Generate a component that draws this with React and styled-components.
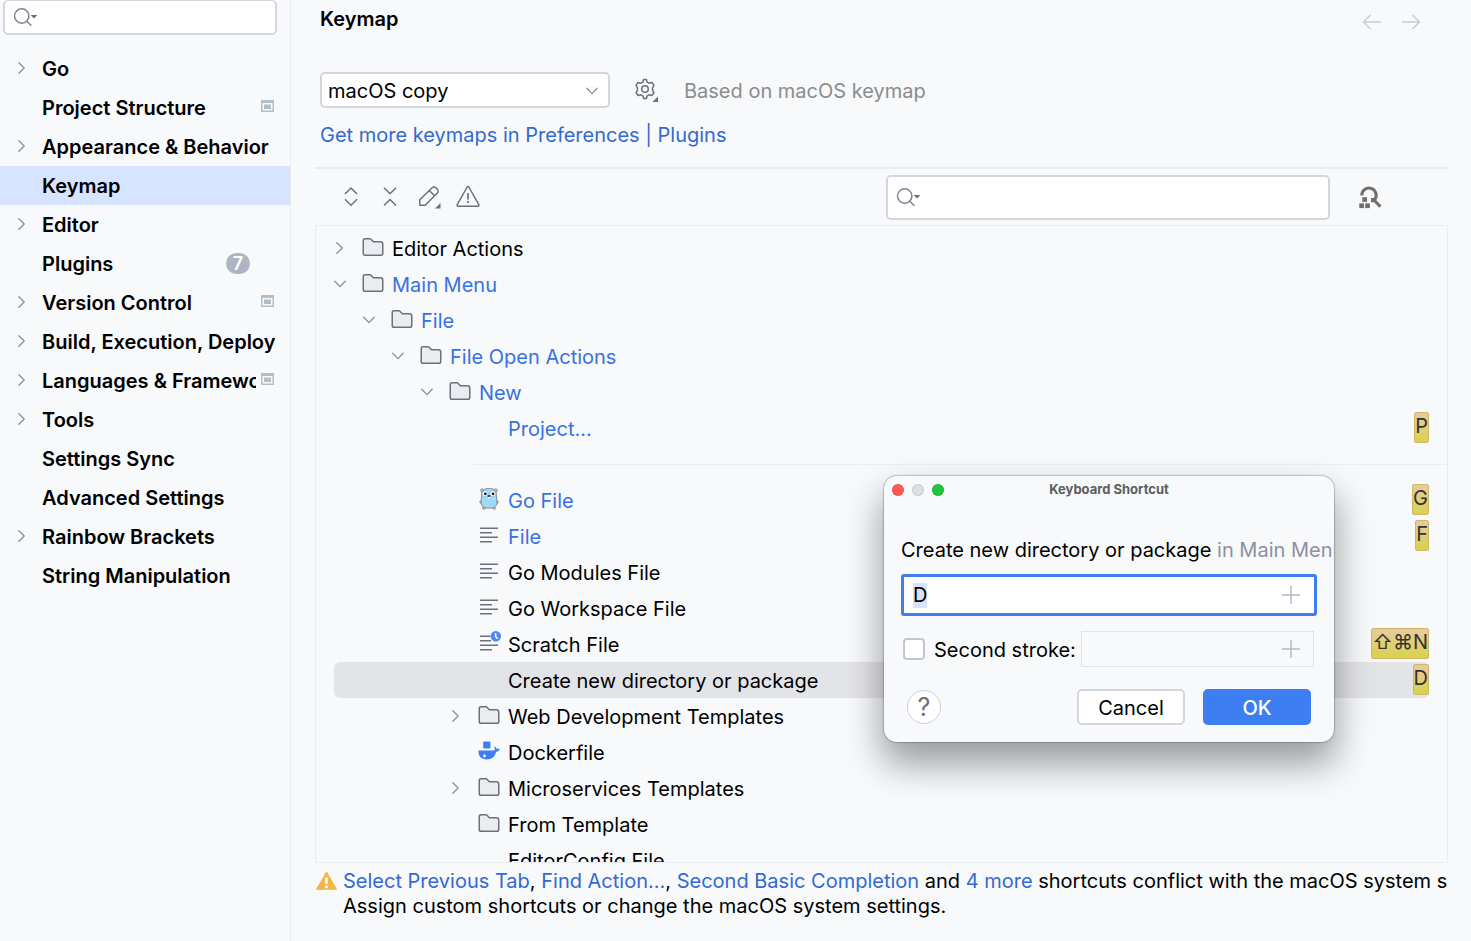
import React, { useEffect, useRef } from "react";
import styled, { createGlobalStyle, css } from "styled-components";

const GlobalStyle = createGlobalStyle`
  * { box-sizing: border-box; }
  body { margin: 0; background: #f7f9fb; }
  body, button, input, select {
    font-family: Inter, "Liberation Sans", sans-serif;
    font-size: 20px;
    line-height: 25px;
    color: #000;
  }
  button { cursor: pointer; }
`;

const Page = styled.div`
  display: flex;
  height: 100vh;
  overflow: hidden;
  position: relative;
`;

/* ---------- sidebar ---------- */

const Sidebar = styled.aside`
  flex: 0 0 291px;
  min-width: 0;
  border-right: 1px solid #ebecf0;
`;

const SearchBox = styled.label`
  display: flex;
  align-items: center;
  background: #fff;
  border: 2px solid #d3d5df;
  border-radius: 5px;
`;

const SidebarSearch = styled(SearchBox)`
  height: 35px;
  margin: 0 13px 14px 3px;
  padding: 0 7px;
  border-top-width: 1px;
`;

const SearchInput = styled.input`
  flex: 1;
  min-width: 0;
  border: 0;
  outline: 0;
  background: transparent;
`;

const NavList = styled.ul`
  list-style: none;
  margin: 0;
  padding: 0;
`;

const NavLink = styled.a`
  display: flex;
  align-items: center;
  height: 39px;
  padding: 0 15px 0 16px;
  color: #000;
  font-weight: 600;
  text-decoration: none;
  background: ${(p) => (p.$active ? "#d7e4ff" : "transparent")};
`;

const NavArrow = styled.span`
  display: flex;
  flex: 0 0 26px;
  padding-bottom: 2px;
`;

const NavText = styled.span`
  flex: 1;
  min-width: 0;
  padding-top: 2px;
  overflow: hidden;
  white-space: nowrap;
`;

const CountBadge = styled.span`
  width: 24px;
  height: 21px;
  margin-right: 25px;
  border-radius: 11px;
  background: #aeb4c3;
  color: #fff;
  font-size: 18px;
  line-height: 21px;
  text-align: center;
`;

const ProjectMark = styled.svg`
  flex: none;
  margin: 0 1px 4px 5px;
`;

/* ---------- main panel ---------- */

const Main = styled.main`
  flex: 1;
  min-width: 0;
  display: flex;
  flex-direction: column;
  padding: 0 23px 22px 24px;
`;

const Header = styled.header`
  display: flex;
  justify-content: space-between;
  align-items: center;
  height: 38px;
  padding: 0 25px 0 5px;
`;

const Title = styled.h1`
  margin: 0;
  font-size: 20px;
  font-weight: 600;
`;

const HistoryButtons = styled.div`
  display: flex;
  gap: 15px;
  padding-top: 6px;
`;

const IconButton = styled.button`
  display: flex;
  flex: none;
  padding: 0;
  border: 0;
  background: transparent;
`;

const SchemeRow = styled.div`
  display: flex;
  align-items: center;
  margin-top: 34px;
  padding-left: 5px;
`;

const SelectWrap = styled.div`
  display: grid;
  align-items: center;
  width: 290px;
  margin-right: 23px;
  > * { grid-area: 1 / 1; }
  > svg { justify-self: end; margin: 2px 12px 0 0; pointer-events: none; }
`;

const Select = styled.select`
  appearance: none;
  width: 100%;
  height: 36px;
  padding: 2px 6px 0;
  border: 2px solid #d3d5df;
  border-radius: 5px;
  background: #fff;
`;

const Hint = styled.span`
  margin-left: 25px;
  padding-top: 2px;
  color: #8c8c8c;
`;

const Link = styled.a`
  color: #3369d0;
  text-decoration: none;
`;

const PluginsLink = styled(Link)`
  align-self: flex-start;
  margin: 15px 0 19px 5px;
`;

const Toolbar = styled.div`
  display: flex;
  align-items: center;
  gap: 15px;
  height: 58px;
  padding: 0 66px 0 24px;
  border-top: 2px solid #ebecf0;
`;

const ActionSearch = styled(SearchBox)`
  flex: 0 1 444px;
  height: 45px;
  margin: 0 13px 0 auto;
  padding: 0 7px;
`;

const Tree = styled.div`
  flex: 1;
  min-height: 0;
  overflow: hidden;
  padding: 4px 0 0 18px;
  border: 1px solid #ebecf0;
`;

const TreeRow = styled.div`
  display: flex;
  align-items: center;
  height: 36px;
  margin-right: 18px;
  padding-left: ${(p) => p.$level * 29}px;
  border-radius: 6px;
  white-space: nowrap;
  color: ${(p) => (p.$changed ? "#3871e1" : "#000")};
  background: ${(p) => (p.$selected ? "#e3e4e8" : "transparent")};
`;

const TreeArrow = styled.span`
  display: flex;
  flex: 0 0 27px;
`;

const TreeIcon = styled.span`
  display: flex;
  flex: 0 0 31px;
  height: 26px;
`;

const TreeText = styled.span`
  padding-top: 2px;
`;

const TreeSeparator = styled.hr`
  height: 1px;
  margin: 18px 0 17px 139px;
  border: 0;
  background: #ebecf0;
`;

const Shortcut = styled.kbd`
  height: 31px;
  margin-left: auto;
  margin-bottom: 2px;
  border: 1px solid #cfb669;
  border-radius: 2px;
  background: linear-gradient(#e8cba0, #d9d24c);
  color: #333;
  font-family: inherit;
  line-height: 27px;
`;

const Conflict = styled.footer`
  display: flex;
  margin-top: 6px;
  overflow: hidden;
  white-space: nowrap;
`;

const ConflictIcon = styled.span`
  flex: 0 0 28px;
`;

const ConflictText = styled.p`
  margin: 0;
`;

/* ---------- dialog ---------- */

const Dialog = styled.form`
  position: absolute;
  left: 884px;
  top: 476px;
  width: 450px;
  overflow: hidden;
  padding-bottom: 17px;
  border-radius: 13px;
  background: #f7f9fb;
  box-shadow: 0 0 1px 1px rgba(0, 0, 0, 0.2), 0 20px 36px 2px rgba(0, 0, 0, 0.38);
`;

const TitleBar = styled.div`
  display: grid;
  align-items: center;
  height: 28px;
  > * { grid-area: 1 / 1; }
`;

const DialogTitle = styled.h2`
  margin: 0;
  padding-bottom: 2px;
  color: #5c5d60;
  font-size: 13px;
  font-weight: 700;
  line-height: 16px;
  text-align: center;
`;

const Lights = styled.div`
  display: flex;
  gap: 8px;
  padding-left: 8px;
`;

const Light = styled.button`
  width: 12px;
  height: 12px;
  padding: 0;
  border: 1px solid rgba(0, 0, 0, 0.1);
  border-radius: 50%;
  background: ${(p) => p.$color};
`;

const DialogBody = styled.div`
  display: flex;
  flex-direction: column;
  padding: 34px 17px 0;
`;

const Subject = styled.label`
  white-space: nowrap;
  span { color: #8d90a0; }
`;

const strokeField = css`
  display: flex;
  align-items: center;
`;

const FirstStroke = styled.div`
  ${strokeField}
  height: 42px;
  margin-top: 11px;
  padding: 0 14px 0 9px;
  border: 3px solid #3d7ff2;
  border-radius: 3px;
  background: #fff;
`;

const StrokeInput = styled.input`
  flex: 1;
  min-width: 0;
  padding: 0;
  border: 0;
  outline: 0;
  background: transparent;
  &::selection { background: #d5e3fe; color: #000; }
`;

const SecondRow = styled.div`
  display: flex;
  align-items: center;
  margin: 15px 3px 0 2px;
`;

const CheckLabel = styled.label`
  display: flex;
  align-items: center;
  gap: 9px;
  flex: 1;
  white-space: nowrap;
  span { padding-top: 2px; }
`;

const Checkbox = styled.input`
  appearance: none;
  width: 22px;
  height: 22px;
  margin: 0;
  border: 2px solid #c3c6d2;
  border-radius: 4px;
  background: #fff;
`;

const SecondStroke = styled.div`
  ${strokeField}
  width: 233px;
  height: 36px;
  padding: 0 13px 0 9px;
  border: 1px solid #e0e2e8;
`;

const Buttons = styled.div`
  display: flex;
  align-items: center;
  gap: 18px;
  margin: 22px 6px 0 6px;
`;

const HelpButton = styled.button`
  width: 34px;
  height: 34px;
  margin-right: auto;
  padding: 0;
  border: 1px solid #cdd0da;
  border-radius: 50%;
  background: #fff;
  color: #6c707e;
  font-size: 25px;
  line-height: 32px;
`;

const DialogButton = styled.button`
  width: 108px;
  height: 36px;
  padding: 2px 0 0;
  border: 2px solid ${(p) => (p.$primary ? "#3d7ff2" : "#d3d5df")};
  border-radius: 5px;
  background: ${(p) => (p.$primary ? "#3d7ff2" : "#fff")};
  color: ${(p) => (p.$primary ? "#fff" : "#000")};
  font-weight: ${(p) => (p.$primary ? 500 : 400)};
`;

/* ---------- icons ---------- */

const Svg = ({ size = 24, box = "0 0 16 16", children }) => (
  <svg width={size} height={size} viewBox={box} fill="none" stroke="#6c707e" aria-hidden="true">
    {children}
  </svg>
);

const Chevron = ({ open }) => (
  <svg width="12" height="12" viewBox="0 0 12 12" fill="none" stroke="#8b8e9b" strokeWidth="1.3" strokeLinecap="round" aria-hidden="true">
    <path d={open ? "M.8 3.2L6 8.6l5.2-5.400" : "M2.800 .8L8.200 6 2.800 11.200"} />
  </svg>
);

const SearchIcon = () => (
  <svg width="28" height="24" viewBox="0 0 28 24" fill="none" stroke="#7f8391" strokeWidth="1.5" aria-hidden="true">
    <circle cx="9.700" cy="11" r="7.200" />
    <path d="M14.800 16.200l4.600 4.600" />
    <path d="M18.600 10h6.800L22 13.600z" fill="#6c707e" stroke="none" />
  </svg>
);

const FolderIcon = () => (
  <Svg>
    <path
      fill="#ebecf0"
      d="M8.1 4.35l.15.15H13A1.5 1.5 0 0 1 14.5 6v6.1c0 .85-.57 1.4-1.13 1.4H2.63c-.56 0-1.13-.55-1.13-1.4V3.9c0-.85.57-1.4 1.13-1.4h3.5c.13 0 .26.06.35.15z"
    />
  </Svg>
);

const TextIcon = () => (
  <Svg>
    <path d="M2 3.5h12M2 6.5h8M2 9.5h12M2 12.5h8" />
  </Svg>
);

const ScratchIcon = () => (
  <svg width="25" height="24" viewBox="0 0 25 24" fill="none" stroke="#6c707e" strokeWidth="1.500" overflow="visible" aria-hidden="true">
    <path d="M3 5.250h10.500M3 9.750h11M3 14.250h18M3 18.750h12" />
    <circle cx="18.800" cy="5.300" r="5.200" fill="#4d89f7" stroke="none" />
    <path d="M18.700 2.300v3.400l2 1.900" stroke="#fff" />
  </svg>
);

const GopherIcon = () => (
  <svg width="24" height="24" viewBox="0 0 24 24" aria-hidden="true">
    <g fill="#d8b59c" stroke="#8a6f62" strokeWidth=".4">
      <ellipse cx="3.800" cy="15" rx="1.200" ry="1.400" />
      <ellipse cx="20.200" cy="15" rx="1.200" ry="1.400" />
      <ellipse cx="6.800" cy="21.300" rx="1.600" ry="1.200" />
      <ellipse cx="17.200" cy="21.300" rx="1.600" ry="1.200" />
    </g>
    <g fill="#9fdaf8" stroke="#5a6b75" strokeWidth=".7">
      <circle cx="5.200" cy="3.400" r="1.500" />
      <circle cx="18.800" cy="3.400" r="1.500" />
      <path d="M12 1.400c4.600 0 7 1.800 7.300 5.400.2 2.300.6 6.500.6 8.800 0 3.800-2.700 5.600-7.900 5.600s-7.900-1.800-7.900-5.600c0-2.300.4-6.500.6-8.800C5 3.200 7.400 1.400 12 1.400z" />
    </g>
    <circle cx="8.200" cy="6.600" r="2.900" fill="#fff" stroke="#7d99a8" strokeWidth=".5" />
    <circle cx="15.800" cy="6.600" r="2.900" fill="#fff" stroke="#7d99a8" strokeWidth=".5" />
    <circle cx="8.400" cy="6.800" r="1.400" fill="#16191c" />
    <circle cx="16" cy="6.800" r="1.400" fill="#16191c" />
    <rect x="11" y="9.500" width="2.200" height="2" fill="#fff" />
    <ellipse cx="12" cy="9" rx="1.600" ry="1" fill="#3d3a3a" />
  </svg>
);

const DockerIcon = () => (
  <svg width="24" height="24" viewBox="0 0 24 24" fill="#3d7ff2" aria-hidden="true">
    <rect x="6.200" y="2.600" width="7.200" height="7" rx="1" />
    <path d="M1.400 11.600h15.800c.5-.5.7-1.100.5-2-.2-1-.2-1.600.1-2 1 .4 1.600 1.200 1.800 2.200h3c.1 1.500-1.300 2.800-3.400 3-1.300 5-4.400 7.700-9.500 7.700-5.500 0-8.300-3-8.300-8.900z" />
    <circle cx="7.500" cy="17" r="1.400" fill="#f7f9fb" />
  </svg>
);

const GearIcon = () => (
  <svg width="26" height="26" viewBox="0 0 26 26" fill="none" stroke="#6c707e" strokeWidth="1.500" aria-hidden="true">
    <circle cx="12" cy="12" r="3.300" />
    <path strokeLinejoin="round" d="M10.600 2.500h2.800l.8 2.700 1.800 1 2.900-.7 2 2.800-1.300 2.300v2.800l1.300 2.300-2 2.800-2.900-.7-1.800 1-.8 2.700h-2.800l-.8-2.700-1.800-1-2.900.7-2-2.800 1.300-2.300v-2.800L3.100 8.300l2-2.800 2.900.7 1.800-1z" />
    <path d="M25 19.500V25h-5.500z" fill="#6c707e" stroke="none" />
  </svg>
);

const ExpandIcon = () => (
  <Svg>
    <path d="M4 6l4-4 4 4M4 9.500l4 4 4-4" />
  </Svg>
);

const CollapseIcon = () => (
  <Svg>
    <path d="M4 1.800l4 4 4-4M4 13.700l4-4 4 4" />
  </Svg>
);

const PencilIcon = () => (
  <svg width="24" height="24" viewBox="0 0 24 24" fill="none" stroke="#6c707e" strokeWidth="1.500" strokeLinejoin="round" aria-hidden="true">
    <path d="M2.800 20.200v-5.400L15.100 2.800a2.600 2.600 0 0 1 3.700 0l1.500 1.500a2.600 2.600 0 0 1 0 3.700L8.200 20.200zM12.300 5.500l5.300 5.300" />
    <path d="M23.500 18v5.500H18z" fill="#6c707e" stroke="none" />
  </svg>
);

const WarningOutlineIcon = () => (
  <svg width="24" height="24" viewBox="0 0 24 24" fill="none" stroke="#6c707e" strokeWidth="1.500" strokeLinejoin="round" aria-hidden="true">
    <path d="M11.200 2a1 1 0 0 1 1.600 0l10 17.700a1 1 0 0 1-.9 1.500H2.100a1 1 0 0 1-.9-1.500z" />
    <path d="M12 8v6.500M12 16v2" strokeWidth="1.700" />
  </svg>
);

const FindShortcutIcon = () => (
  <svg width="24" height="24" viewBox="0 0 24 24" fill="none" stroke="#6e6e6e" strokeWidth="3" aria-hidden="true">
    <path d="M3.800 10.500a7.200 7.200 0 1 1 13 4M14.500 13v4.200M15 14l7.400 7.600" />
    <g fill="#6e6e6e" stroke="none">
      <rect x="4.300" y="12.200" width="4.700" height="4.700" />
      <rect x="1.300" y="18.400" width="4.700" height="4.700" />
      <rect x="7.200" y="18.400" width="4.700" height="4.700" />
    </g>
  </svg>
);

const ArrowIcon = ({ forward }) => (
  <svg width="24" height="24" viewBox="0 0 24 24" fill="none" stroke="#c9ccd3" strokeWidth="1.500" aria-hidden="true">
    <path d={forward ? "M3 12h17.500M13.500 5l7 7-7 7" : "M21 12H3.500M10.500 5l-7 7 7 7"} />
  </svg>
);

const PlusIcon = () => (
  <svg width="18" height="18" viewBox="0 0 18 18" fill="none" stroke="#b4b8c4" strokeWidth="1.500" aria-hidden="true">
    <path d="M9 0v18M0 9h18" />
  </svg>
);

const AlertIcon = () => (
  <svg width="22" height="24" viewBox="0 0 22 24" aria-hidden="true">
    <path d="M11.500 3L21.500 20.300h-20z" fill="#f2b64b" stroke="#f2b64b" strokeLinejoin="round" />
    <path d="M11.500 8.500v6.200M11.500 16.500v2.700" stroke="#fff" strokeWidth="2.600" />
  </svg>
);

const ProjectIcon = () => (
  <ProjectMark width="13" height="12" viewBox="0 0 13 12" aria-hidden="true">
    <path d="M0 0h13v12H0z" fill="#b3bec6" />
    <path d="M1.500 3h10v7.500h-10z" fill="#f7f9fb" />
    <path d="M3 4.500h7v4.500H3z" fill="#b3bec6" />
  </ProjectMark>
);

/* ---------- data ---------- */

const sections = [
  { name: "Go", arrow: true },
  { name: "Project Structure", project: true },
  { name: "Appearance & Behavior", arrow: true },
  { name: "Keymap", active: true },
  { name: "Editor", arrow: true },
  { name: "Plugins", count: 7 },
  { name: "Version Control", arrow: true, project: true },
  { name: "Build, Execution, Deployment", arrow: true },
  { name: "Languages & Frameworks", arrow: true, project: true },
  { name: "Tools", arrow: true },
  { name: "Settings Sync" },
  { name: "Advanced Settings" },
  { name: "Rainbow Brackets", arrow: true },
  { name: "String Manipulation" },
];

const actions = [
  { name: "Editor Actions", level: 0, arrow: "closed", icon: FolderIcon },
  { name: "Main Menu", level: 0, arrow: "open", icon: FolderIcon, changed: true },
  { name: "File", level: 1, arrow: "open", icon: FolderIcon, changed: true },
  { name: "File Open Actions", level: 2, arrow: "open", icon: FolderIcon, changed: true },
  { name: "New", level: 3, arrow: "open", icon: FolderIcon, changed: true },
  { name: "Project...", level: 4, changed: true, shortcut: "P" },
  { separator: true },
  { name: "Go File", level: 4, icon: GopherIcon, changed: true, shortcut: "G" },
  { name: "File", level: 4, icon: TextIcon, changed: true, shortcut: "F" },
  { name: "Go Modules File", level: 4, icon: TextIcon },
  { name: "Go Workspace File", level: 4, icon: TextIcon },
  { name: "Scratch File", level: 4, icon: ScratchIcon, shortcut: "⇧⌘N" },
  { name: "Create new directory or package", level: 4, selected: true, shortcut: "D" },
  { name: "Web Development Templates", level: 4, arrow: "closed", icon: FolderIcon },
  { name: "Dockerfile", level: 4, icon: DockerIcon },
  { name: "Microservices Templates", level: 4, arrow: "closed", icon: FolderIcon },
  { name: "From Template", level: 4, icon: FolderIcon },
  { name: "EditorConfig File", level: 4 },
];

function ActionRow({ item }) {
  const Icon = item.icon;
  return (
    <TreeRow
      role="treeitem"
      aria-level={item.level + 1}
      aria-selected={!!item.selected}
      $level={item.level}
      $changed={item.changed}
      $selected={item.selected}
    >
      <TreeArrow>{item.arrow && <Chevron open={item.arrow === "open"} />}</TreeArrow>
      <TreeIcon>{Icon && <Icon />}</TreeIcon>
      <TreeText>{item.name}</TreeText>
      {item.shortcut && <Shortcut>{item.shortcut}</Shortcut>}
    </TreeRow>
  );
}

function ShortcutDialog() {
  const strokeRef = useRef(null);
  useEffect(() => {
    strokeRef.current.focus({ preventScroll: true });
    strokeRef.current.select();
  }, []);
  return (
    <Dialog role="dialog" aria-labelledby="dialog-title" onSubmit={(e) => e.preventDefault()}>
      <TitleBar>
        <DialogTitle id="dialog-title">Keyboard Shortcut</DialogTitle>
        <Lights>
          <Light type="button" aria-label="Close" $color="#fe5850" />
          <Light type="button" aria-label="Minimize" disabled $color="#dedfe0" />
          <Light type="button" aria-label="Zoom" $color="#25c33c" />
        </Lights>
      </TitleBar>
      <DialogBody>
        <Subject htmlFor="first-stroke">
          Create new directory or package <span>in Main Menu</span>
        </Subject>
        <FirstStroke>
          <StrokeInput id="first-stroke" ref={strokeRef} defaultValue="D" />
          <IconButton type="button" aria-label="Add key"><PlusIcon /></IconButton>
        </FirstStroke>
        <SecondRow>
          <CheckLabel>
            <Checkbox type="checkbox" />
            <span>Second stroke:</span>
          </CheckLabel>
          <SecondStroke>
            <StrokeInput aria-label="Second stroke keys" disabled />
            <IconButton type="button" aria-label="Add second key" disabled><PlusIcon /></IconButton>
          </SecondStroke>
        </SecondRow>
        <Buttons>
          <HelpButton type="button" aria-label="Help">?</HelpButton>
          <DialogButton type="button">Cancel</DialogButton>
          <DialogButton type="submit" $primary>OK</DialogButton>
        </Buttons>
      </DialogBody>
    </Dialog>
  );
}

export default function App() {
  return (
    <Page>
      <GlobalStyle />
      <Sidebar>
        <SidebarSearch>
          <SearchIcon />
          <SearchInput type="text" aria-label="Search settings" />
        </SidebarSearch>
        <nav aria-label="Settings">
          <NavList>
            {sections.map((s) => (
              <li key={s.name}>
                <NavLink href="#" $active={s.active} aria-current={s.active ? "page" : undefined}>
                  <NavArrow>{s.arrow && <Chevron />}</NavArrow>
                  <NavText>{s.name}</NavText>
                  {s.project && <ProjectIcon />}
                  {s.count && <CountBadge>{s.count}</CountBadge>}
                </NavLink>
              </li>
            ))}
          </NavList>
        </nav>
      </Sidebar>

      <Main>
        <Header>
          <Title>Keymap</Title>
          <HistoryButtons>
            <IconButton aria-label="Back"><ArrowIcon /></IconButton>
            <IconButton aria-label="Forward"><ArrowIcon forward /></IconButton>
          </HistoryButtons>
        </Header>

        <SchemeRow>
          <SelectWrap>
            <Select aria-label="Keymap scheme">
              <option>macOS copy</option>
            </Select>
            <Chevron open />
          </SelectWrap>
          <IconButton aria-label="Scheme actions"><GearIcon /></IconButton>
          <Hint>Based on macOS keymap</Hint>
        </SchemeRow>
        <PluginsLink href="#">Get more keymaps in Preferences | Plugins</PluginsLink>

        <Toolbar>
          <IconButton aria-label="Expand all"><ExpandIcon /></IconButton>
          <IconButton aria-label="Collapse all"><CollapseIcon /></IconButton>
          <IconButton aria-label="Edit shortcut"><PencilIcon /></IconButton>
          <IconButton aria-label="Show conflicts"><WarningOutlineIcon /></IconButton>
          <ActionSearch>
            <SearchIcon />
            <SearchInput type="text" aria-label="Search actions" />
          </ActionSearch>
          <IconButton aria-label="Find actions by shortcut"><FindShortcutIcon /></IconButton>
        </Toolbar>

        <Tree role="tree" aria-label="Actions">
          {actions.map((a, i) => (a.separator ? <TreeSeparator key={i} /> : <ActionRow key={i} item={a} />))}
        </Tree>

        <Conflict>
          <ConflictIcon><AlertIcon /></ConflictIcon>
          <ConflictText>
            <Link href="#">Select Previous Tab</Link>, <Link href="#">Find Action...</Link>,{" "}
            <Link href="#">Second Basic Completion</Link> and <Link href="#">4 more</Link> shortcuts conflict with the
            macOS system shortcuts.
            <br />
            Assign custom shortcuts or change the macOS system settings.
          </ConflictText>
        </Conflict>
      </Main>

      <ShortcutDialog />
    </Page>
  );
}
